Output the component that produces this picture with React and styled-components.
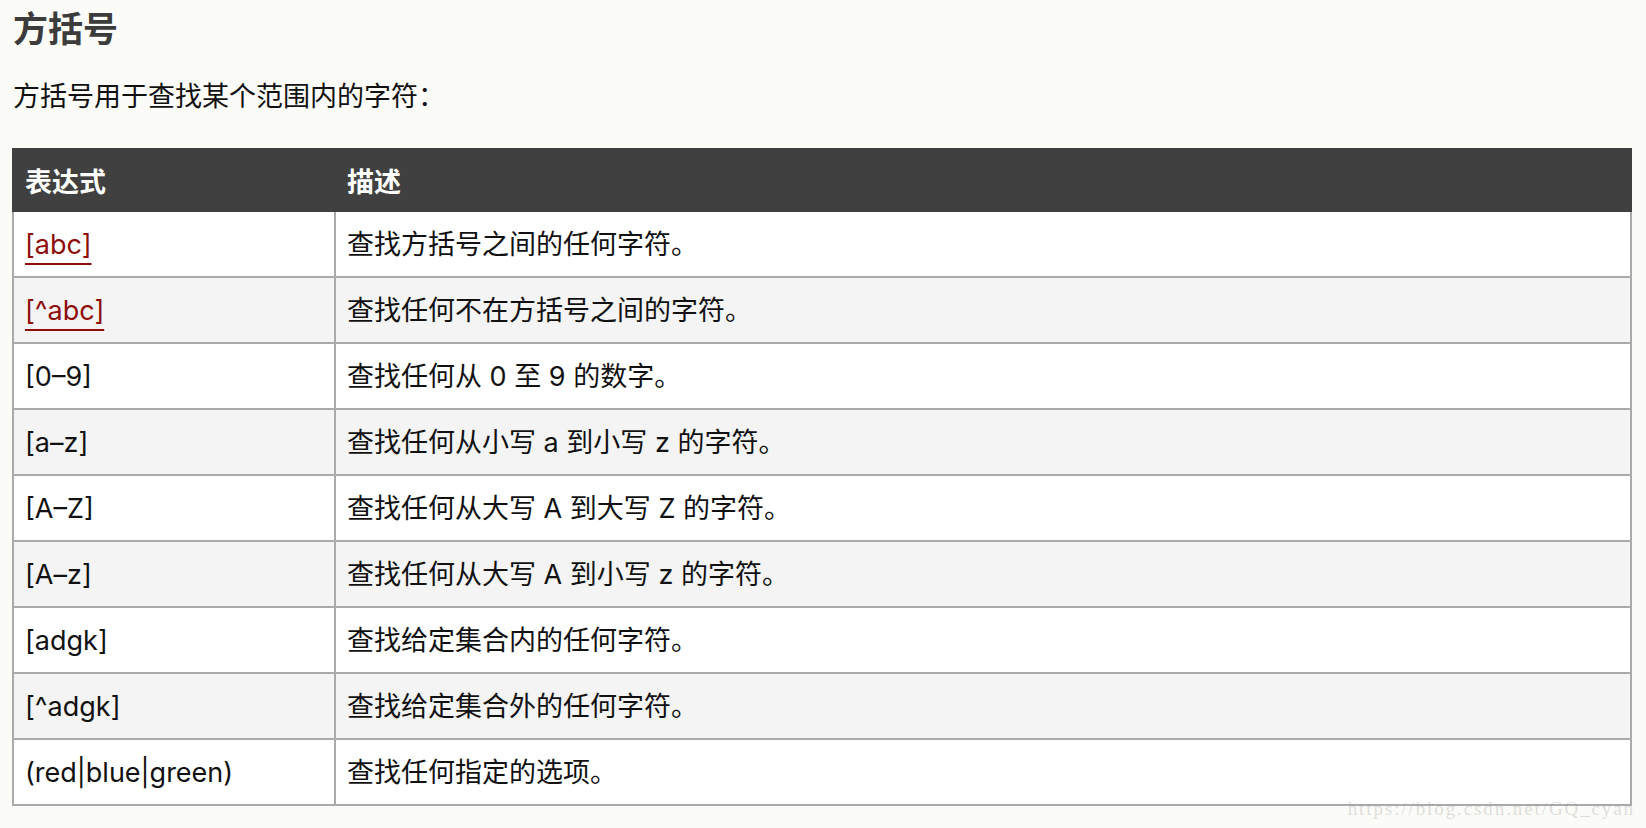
import React from "react";
import styled, { createGlobalStyle } from "styled-components";

const Global = createGlobalStyle`
  html, body { margin: 0; padding: 0; background: #fbfbf7; }
  body {
    font-family: Inter, "Noto Sans CJK SC", sans-serif;
    color: #111;
    width: 1646px;
    height: 828px;
    overflow: hidden;
  }
`;

const Page = styled.div`
  position: relative;
  height: 828px;
  padding: 0 14px 0 12px;
  box-sizing: border-box;
`;

const Title = styled.h2`
  margin: 0;
  padding-left: 1px;
  font-size: 35px;
  line-height: 54px;
  font-weight: 700;
  color: #3c3c3c;
  font-family: "Noto Sans CJK SC", sans-serif;
`;

const Intro = styled.p`
  margin: 23px 0 31px;
  padding-left: 1px;
  font-size: 27px;
  line-height: 40px;
  color: #111;
`;

const Table = styled.table`
  width: 100%;
  border-collapse: collapse;
  table-layout: fixed;
  border: 2px solid #aaaaaa;
`;

const HeadCell = styled.th`
  background: #404040;
  color: #fff;
  text-align: left;
  font-weight: 700;
  font-size: 27px;
  height: 62px;
  padding: 0 11px;
  border: 2px solid #404040;
  font-family: "Noto Sans CJK SC", sans-serif;
  width: ${(p) => p.$w || "auto"};
  box-sizing: border-box;
`;

const Row = styled.tr`
  background: ${(p) => (p.$alt ? "#f4f4f4" : "#ffffff")};
`;

const Cell = styled.td`
  border: 2px solid #aaaaaa;
  height: 66px;
  padding: 1px 11px 0;
  font-size: 27px;
  line-height: 36px;
  color: #111;
  vertical-align: middle;
  box-sizing: border-box;
`;

const Link = styled.a`
  color: #8e0d0b;
  text-decoration: underline;
  text-decoration-thickness: 2px;
  text-underline-offset: 9px;
`;

const Watermark = styled.div`
  position: absolute;
  right: 11px;
  bottom: 9px;
  font-family: "Liberation Serif", "DejaVu Serif", serif;
  font-size: 19px;
  letter-spacing: 1.9px;
  line-height: 20px;
  color: rgba(150, 150, 150, 0.3);
  pointer-events: none;
`;

const rows = [
  { expr: "[abc]", link: true, desc: "查找方括号之间的任何字符。" },
  { expr: "[^abc]", link: true, desc: "查找任何不在方括号之间的字符。" },
  { expr: "[0–9]", desc: "查找任何从 0 至 9 的数字。" },
  { expr: "[a–z]", desc: "查找任何从小写 a 到小写 z 的字符。" },
  { expr: "[A–Z]", desc: "查找任何从大写 A 到大写 Z 的字符。" },
  { expr: "[A–z]", desc: "查找任何从大写 A 到小写 z 的字符。" },
  { expr: "[adgk]", desc: "查找给定集合内的任何字符。" },
  { expr: "[^adgk]", desc: "查找给定集合外的任何字符。" },
  { expr: "(red|blue|green)", desc: "查找任何指定的选项。" },
];

export default function App() {
  return (
    <>
      <Global />
      <Page>
        <Title>方括号</Title>
        <Intro>方括号用于查找某个范围内的字符：</Intro>
        <Table>
          <thead>
            <tr>
              <HeadCell $w="322px">表达式</HeadCell>
              <HeadCell>描述</HeadCell>
            </tr>
          </thead>
          <tbody>
            {rows.map((r, i) => (
              <Row key={i} $alt={i % 2 === 1}>
                <Cell>{r.link ? <Link href="#">{r.expr}</Link> : r.expr}</Cell>
                <Cell>{r.desc}</Cell>
              </Row>
            ))}
          </tbody>
        </Table>
        <Watermark>https://blog.csdn.net/GQ_cyan</Watermark>
      </Page>
    </>
  );
}
